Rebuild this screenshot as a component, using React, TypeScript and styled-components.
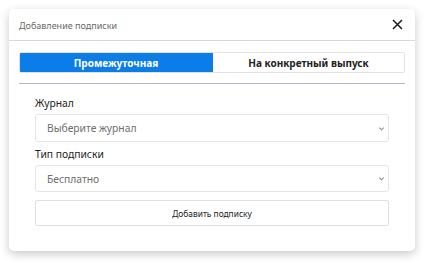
import React from 'react';
import styled, { createGlobalStyle } from 'styled-components';

const GlobalStyle = createGlobalStyle`
  html, body {
    margin: 0;
    padding: 0;
    background: #fff;
    font-family: 'Noto Sans', 'Open Sans', sans-serif;
  }
`;

const Page = styled.div`
  padding: 9px 18px 17px 9px;
  width: 406px;
`;

const Card = styled.div`
  background: #fff;
  border-radius: 5px;
  box-shadow: 0 3px 10px rgba(0, 0, 0, 0.22);
  overflow: hidden;
`;

const Header = styled.div`
  display: flex;
  align-items: center;
  justify-content: space-between;
  height: 31px;
  padding: 0 12px 0 10px;
  border-bottom: 1px solid #d8d8d8;
`;

const Title = styled.div`
  font-size: 9px;
  color: #6a6a6a;
  margin-top: 1px;
`;

const CloseButton = styled.button`
  border: 0;
  background: none;
  padding: 0;
  width: 11px;
  height: 11px;
  display: flex;
  svg {
    width: 11px;
    height: 11px;
  }
`;

const Body = styled.div`
  padding: 11px 10px 25px;
`;

const Tabs = styled.div`
  display: grid;
  grid-template-columns: 193px 1fr;
  height: 21px;
  border: 1px solid #e2e2e2;
  border-radius: 2px;
  overflow: hidden;
  box-sizing: border-box;
`;

const Tab = styled.div<{ $active?: boolean }>`
  display: flex;
  align-items: center;
  justify-content: center;
  font-size: 10px;
  font-weight: 700;
  background: ${(p) => (p.$active ? '#0b7de8' : '#fff')};
  color: ${(p) => (p.$active ? '#fff' : '#222')};
  margin: ${(p) => (p.$active ? '-1px 0 -1px -1px' : '0')};
`;

const Divider = styled.hr`
  border: 0;
  height: 1px;
  background: #b3b8c4;
  margin: 10px 0 0;
`;

const Form = styled.div`
  display: flex;
  flex-direction: column;
  padding: 12px 16px 0;
`;

const Label = styled.label`
  font-size: 10.3px;
  color: #222;
  line-height: 15px;
  margin-bottom: 3px;
`;

const SelectBox = styled.div<{ $h: number }>`
  display: flex;
  align-items: center;
  justify-content: space-between;
  height: ${(p) => p.$h}px;
  box-sizing: border-box;
  border: 1px solid #e4e4e4;
  border-radius: 3px;
  padding: 0 3px 0 11px;
  font-size: 10.3px;
  color: #6e6e6e;
  margin-bottom: 5px;
  svg {
    width: 7px;
    height: 7px;
  }
`;

const SubmitButton = styled.button`
  height: 26px;
  margin-top: 3px;
  border: 1px solid #e0e0e0;
  border-radius: 2px;
  background: #fff;
  font-family: inherit;
  font-size: 8.4px;
  color: #222;
`;

const Chevron = () => (
  <svg viewBox="0 0 8 8">
    <path d="M1.5 3 L4 5.5 L6.5 3" fill="none" stroke="#8a8a8a" strokeWidth="1.2" />
  </svg>
);

const Select: React.FC<{ value: string; h: number }> = ({ value, h }) => (
  <SelectBox $h={h}>
    <span>{value}</span>
    <Chevron />
  </SelectBox>
);

export default function App() {
  return (
    <>
      <GlobalStyle />
      <Page>
        <Card>
          <Header>
            <Title>Добавление подписки</Title>
            <CloseButton>
              <svg viewBox="0 0 11 11">
                <path d="M1 1 L10 10 M10 1 L1 10" stroke="#1a1a1a" strokeWidth="1.5" />
              </svg>
            </CloseButton>
          </Header>
          <Body>
            <Tabs>
              <Tab $active>Промежуточная</Tab>
              <Tab>На конкретный выпуск</Tab>
            </Tabs>
            <Divider />
            <Form>
              <Label>Журнал</Label>
              <Select value="Выберите журнал" h={28} />
              <Label>Тип подписки</Label>
              <Select value="Бесплатно" h={27} />
              <SubmitButton>Добавить подписку</SubmitButton>
            </Form>
          </Body>
        </Card>
      </Page>
    </>
  );
}
